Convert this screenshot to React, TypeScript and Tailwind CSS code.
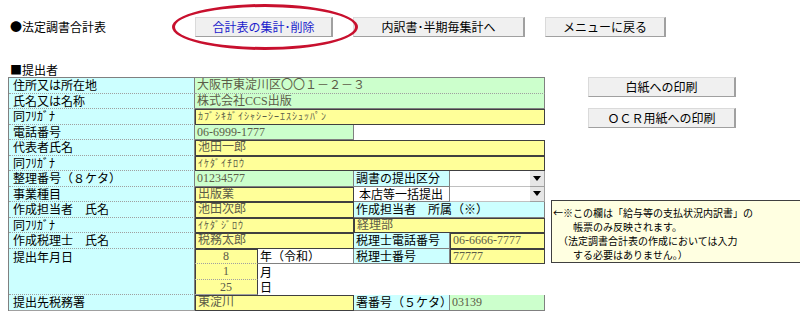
import React from "react";

const L =
  "bg-[#ccffff] border-r border-b border-r-[#808080] border-b-[#a0a0a0] [border-bottom-style:dotted] pl-[4px] flex items-center text-[12px] text-black whitespace-nowrap leading-[14px]";
const L2 =
  "bg-[#ccffff] border-r border-b border-[#808080] pl-[2px] flex items-center text-[12px] text-black whitespace-nowrap leading-[14px]";
const G =
  "bg-[#ccffcc] border-r border-b border-[#808080] pl-[2px] flex items-center text-[12px] text-[#5c5c48] font-['Liberation_Serif','Noto_Sans_CJK_JP',serif] whitespace-nowrap leading-[14px]";
const GD =
  "bg-[#ccffcc] border-r border-b border-r-[#808080] border-b-[#a0a0a0] [border-bottom-style:dotted] pl-[2px] flex items-center text-[12px] text-[#5c5c48] font-['Liberation_Serif','Noto_Sans_CJK_JP',serif] whitespace-nowrap leading-[14px]";
const Y =
  "bg-[#ffff99] border-r border-b border-[#404040] shadow-[inset_1px_1px_0_#404040] pl-[3px] flex items-center text-[12px] text-[#5c5c48] font-['Liberation_Serif','Noto_Sans_CJK_JP',serif] whitespace-nowrap leading-[14px]";
const YC =
  "bg-[#ffff99] border-r border-b border-[#404040] [border-bottom-style:dotted] border-b-[#a0a0a0] shadow-[inset_1px_0_0_#404040] flex items-center justify-center text-[12px] text-[#5c5c48] font-['Liberation_Serif','Noto_Sans_CJK_JP',serif] whitespace-nowrap leading-[14px]";
const YK =
  "bg-[#ffff99] border-r border-b border-[#404040] shadow-[inset_1px_1px_0_#404040] pl-[3px] flex items-center text-[10px] tracking-[1px] text-[#5c5c48] whitespace-nowrap leading-[14px]";
const W =
  "bg-white pl-[2px] flex items-center text-[12px] text-black whitespace-nowrap leading-[14px]";

const btn =
  "h-[20px] bg-[#f0f0f0] border border-[#dadada] border-r-2 border-r-[#a0a0a0] border-b-[#a0a0a0] text-[12px] flex items-center justify-center leading-[14px] whitespace-nowrap";

function Arrow() {
  return (
    <div className="bg-[#e6e6e6] border-b border-r border-[#a0a0a0] flex items-center justify-center">
      <svg width="8" height="5" viewBox="0 0 8 5">
        <path d="M0 0H8L4 5Z" fill="#000" />
      </svg>
    </div>
  );
}

export default function App() {
  return (
    <div className="relative w-[800px] h-[322px] overflow-hidden bg-white text-black font-['Noto_Sans_CJK_JP','Noto_Sans',sans-serif]">
      {/* top row */}
      <div className="flex items-center h-[20px] mt-[17px]">
        <div className="ml-[10px] w-[185px] text-[12px] leading-[14px]">●法定調書合計表</div>
        <div className={btn + " w-[138px] text-[#1c1ccc]"}>合計表の集計･削除</div>
        <div className={btn + " ml-[20px] w-[172px]"}>内訳書･半期毎集計へ</div>
        <div className={btn + " ml-[20px] w-[121px]"}>メニューに戻る</div>
      </div>

      <div className="mt-[26px] ml-[10px] text-[12px] leading-[14px]">■提出者</div>

      <div className="flex ml-[8px]">
        <div className="grid grid-cols-[186px_63px_96px_96px_80px_15px] grid-rows-[repeat(15,15.5px)] border-t border-l border-[#808080] shrink-0">
          {/* 1 */}
          <div className={L}>住所又は所在地</div>
          <div className={GD + " col-span-5"}>大阪市東淀川区〇〇１－２－３</div>
          {/* 2 */}
          <div className={L}>氏名又は名称</div>
          <div className={G + " col-span-5"}>株式会社CCS出版</div>
          {/* 3 */}
          <div className={L}>同ﾌﾘｶﾞﾅ</div>
          <div className={YK + " col-span-5"}>ｶﾌﾞｼｷｶﾞｲｼｬｼｰｼｰｴｽｼｭｯﾊﾟﾝ</div>
          {/* 4 */}
          <div className={L}>電話番号</div>
          <div className={G + " col-span-2"}>06-6999-1777</div>
          <div className="col-span-3 bg-white" />
          {/* 5 */}
          <div className={L}>代表者氏名</div>
          <div className={Y + " col-span-5"}>池田一郎</div>
          {/* 6 */}
          <div className={L}>同ﾌﾘｶﾞﾅ</div>
          <div className={YK + " col-span-5"}>ｲｹﾀﾞｲﾁﾛｳ</div>
          {/* 7 */}
          <div className={L}>整理番号（８ケタ）</div>
          <div className={G + " col-span-2"}>01234577</div>
          <div className={L2}>調書の提出区分</div>
          <div className="bg-white border-b border-[#c0c0c0]" />
          <Arrow />
          {/* 8 */}
          <div className={L}>事業種目</div>
          <div className={Y + " col-span-2"}>出版業</div>
          <div className={L2 + " bg-white pl-[5px]"}>本店等一括提出</div>
          <div className="bg-white border-b border-[#c0c0c0]" />
          <Arrow />
          {/* 9 */}
          <div className={L}>作成担当者　氏名</div>
          <div className={Y + " col-span-2"}>池田次郎</div>
          <div className={L2 + " col-span-3"}>作成担当者　所属（※）</div>
          {/* 10 */}
          <div className={L}>同ﾌﾘｶﾞﾅ</div>
          <div className={YK + " col-span-2"}>ｲｹﾀﾞｼﾞﾛｳ</div>
          <div className={Y + " col-span-3"}>経理部</div>
          {/* 11 */}
          <div className={L}>作成税理士　氏名</div>
          <div className={Y + " col-span-2"}>税務太郎</div>
          <div className={L2}>税理士電話番号</div>
          <div className={Y + " col-span-2"}>06-6666-7777</div>
          {/* 12 */}
          <div className={L + " row-span-3 items-start pt-[1px]"}>提出年月日</div>
          <div className={YC + " shadow-[inset_1px_1px_0_#404040]"}>8</div>
          <div className={W + " border-b border-r border-[#808080]"}>年（令和）</div>
          <div className={L2}>税理士番号</div>
          <div className={Y + " col-span-2"}>77777</div>
          {/* 13 */}
          <div className={YC}>1</div>
          <div className={W}>月</div>
          <div className="col-span-3 bg-white" />
          {/* 14 */}
          <div className={YC + " [border-bottom-style:solid] border-b-[#404040]"}>25</div>
          <div className={W}>日</div>
          <div className="col-span-3 bg-white" />
          {/* 15 */}
          <div className={L + " [border-bottom-style:solid] border-b-[#808080]"}>提出先税務署</div>
          <div className={Y + " col-span-2"}>東淀川</div>
          <div className={L2}>署番号（５ケタ）</div>
          <div className={G + " col-span-2"}>03139</div>
        </div>

        <div className="flex flex-col">
          <div className={btn + " ml-[43px] w-[148px]"}>白紙への印刷</div>
          <div className={btn + " ml-[43px] mt-[11px] w-[148px]"}>ＯＣＲ用紙への印刷</div>
          <div className="ml-[6px] mt-[72px] w-[270px] h-[63px] bg-[#ffffe1] border border-[#404040] pt-[5px] pl-[1px] text-[10px] leading-[14px] whitespace-pre text-black">
            <div>←※この欄は「給与等の支払状況内訳書」の</div>
            <div>{"　　帳票のみ反映されます。"}</div>
            <div>{"　（法定調書合計表の作成においては入力"}</div>
            <div>{"　　する必要はありません。）"}</div>
          </div>
        </div>
      </div>

      {/* red annotation ellipse */}
      <div className="absolute left-[172px] top-[4px] w-[186px] h-[46px] rounded-[50%] border-[3px] border-[#c8102e] pointer-events-none" />
    </div>
  );
}
